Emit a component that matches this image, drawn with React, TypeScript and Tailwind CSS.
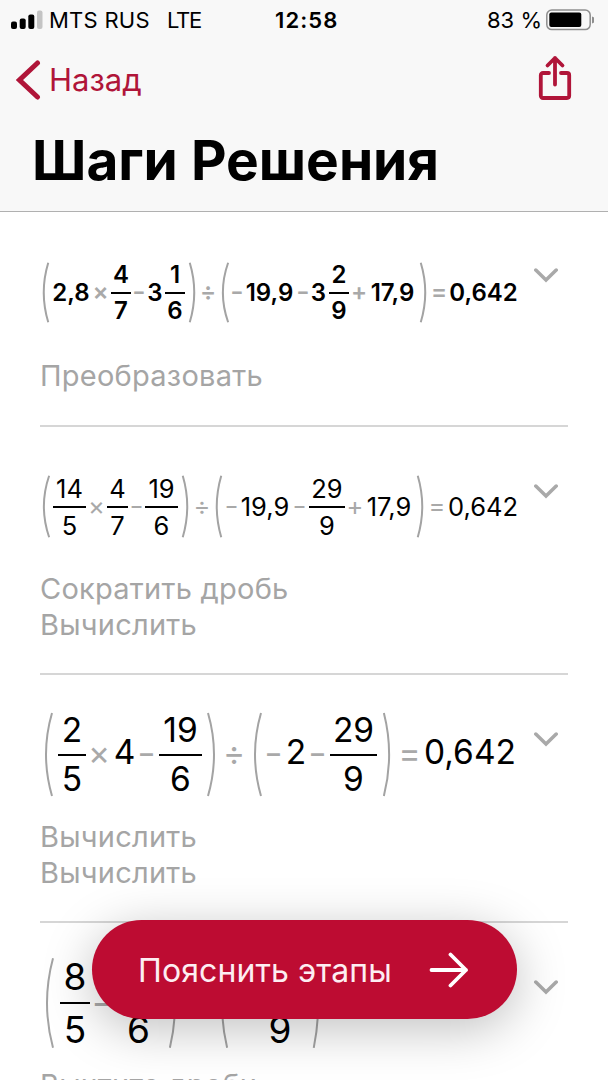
import React from 'react';
import type { ReactNode } from 'react';
import clsx from 'clsx';

interface TokenProps {
  className?: string;
  children?: ReactNode;
}

function Num({ className, children }: TokenProps) {
  return (
    <span className={clsx('flex shrink-0 justify-center whitespace-nowrap', className)}>
      {children}
    </span>
  );
}

function Op({ className, children }: TokenProps) {
  return (
    <span className={clsx('flex shrink-0 justify-center whitespace-nowrap pb-0.5 text-[#a9a9a9]', className)}>
      {children}
    </span>
  );
}

function Minus({ className }: { className?: string }) {
  return <Op className={clsx('scale-x-[1.2]', className)}>-</Op>;
}

function Frac({ top, bottom, className }: { top: string; bottom: string; className?: string }) {
  return (
    <span className={clsx('flex shrink-0 flex-col items-center whitespace-nowrap', className)}>
      <span>{top}</span>
      <span className="h-0.5 w-full bg-black" />
      <span>{bottom}</span>
    </span>
  );
}

function Paren({ right, className }: { right?: boolean; className?: string }) {
  return (
    <svg
      className={clsx('h-full shrink-0 overflow-visible text-[#a3a3a3]', className)}
      viewBox="0 0 8 80"
      preserveAspectRatio="none"
      fill="none"
      stroke="currentColor"
      strokeWidth="2"
    >
      <path
        d={right ? 'M1 1Q13 40 1 79' : 'M7 1Q-5 40 7 79'}
        vectorEffect="non-scaling-stroke"
      />
    </svg>
  );
}

function Chevron({ className }: { className?: string }) {
  return (
    <svg className={clsx('shrink-0', className)} width="24" height="15" viewBox="0 0 24 15" fill="none">
      <path d="M1.8 2 12 12 22.2 2" stroke="#a9a9a9" strokeWidth="3.5" strokeLinecap="round" />
    </svg>
  );
}

interface StepProps {
  className: string;
  formulaClass: string;
  chevronClass: string;
  notesClass: string;
  notes: string[];
  children: ReactNode;
}

function Step({ className, formulaClass, chevronClass, notesClass, notes, children }: StepProps) {
  return (
    <section className={clsx('mx-10 border-b-2 border-[#d6d6d6]', className)}>
      <div className="flex items-start">
        <div className={clsx('flex w-[494px] shrink-0 items-center', formulaClass)}>{children}</div>
        <Chevron className={chevronClass} />
      </div>
      <div className={clsx('text-[29px] leading-9 tracking-[0.25px] text-[#a5a5a5]', notesClass)}>
        {notes.map((note, i) => (
          <p key={i}>{note}</p>
        ))}
      </div>
    </section>
  );
}

function StatusBar() {
  return (
    <div className="flex h-10 items-center text-[22px]">
      <svg className="ml-[11px]" width="32" height="20" viewBox="0 0 32 20">
        <rect x="0" y="11.5" width="6" height="7.5" rx="2" />
        <rect x="8.7" y="8.5" width="6" height="10.5" rx="2" />
        <rect x="17.3" y="4.5" width="6" height="14.5" rx="2" />
        <rect x="26" y="0.5" width="5.5" height="18.5" rx="2" fill="#c4c4c4" />
      </svg>
      <span className="ml-1.5 w-[101px] whitespace-nowrap tracking-[0.25px]">MTS RUS</span>
      <span className="ml-[17px] w-[34px] whitespace-nowrap tracking-[-1.3px]">LTE</span>
      <span className="ml-[74px] w-[64px] whitespace-nowrap font-semibold tracking-[1.1px]">12:58</span>
      <span className="ml-[148px] w-[55px] whitespace-nowrap">83 %</span>
      <svg className="ml-1" width="48" height="22" viewBox="0 0 48 22">
        <rect x="0.8" y="1" width="43.4" height="19.6" rx="5" fill="none" stroke="#8e8e8e" strokeWidth="1.5" />
        <rect x="3.3" y="3.5" width="32" height="14.5" rx="2" />
        <path d="M46 7.5v7q3-1 3-3.5t-3-3.5Z" fill="#8e8e8e" />
      </svg>
    </div>
  );
}

export default function App() {
  return (
    <div className="relative h-[1080px] w-[608px] overflow-hidden bg-white font-['Inter','Liberation_Sans',sans-serif] text-black">
      <header className="h-[212px] border-b border-[#b0b0b0] bg-[#f8f8f8]">
        <StatusBar />
        <div className="flex h-20 items-center justify-between pl-4 pr-[36px] text-[#b01539]">
          <button className="flex items-center text-[31px]">
            <svg width="25" height="40" viewBox="0 0 25 40" fill="none">
              <path d="M21.500 3 3.500 20 21.500 37" stroke="currentColor" strokeWidth="5" strokeLinecap="round" />
            </svg>
            <span className="ml-2">Назад</span>
          </button>
          <svg className="-mt-1" width="34" height="46" viewBox="0 0 34 46" fill="none" stroke="currentColor" strokeWidth="3.8" strokeLinecap="round" strokeLinejoin="round">
            <path d="M11 18H5a2.2 2.2 0 0 0-2.2 2.2v20.6A2.2 2.2 0 0 0 5 43h24a2.2 2.2 0 0 0 2.2-2.2V20.2A2.2 2.2 0 0 0 29 18h-6" />
            <path d="M17 29.5V3M9.5 10.5 17 3l7.500 7.500" />
          </svg>
        </div>
        <h1 className="pl-8 text-[55px] font-bold leading-[81px]">Шаги Решения</h1>
      </header>

      <main>
        <Step
          className="pt-[50px] pb-[31px]"
          formulaClass="h-[61px] text-[24px] font-semibold leading-[33.500px]"
          chevronClass="mt-1.5"
          notesClass="mt-[35px]"
          notes={['Преобразовать']}
        >
          <Paren className="ml-[3px] w-1.5" />
          <Num className="ml-1 w-9">2,8</Num>
          <Op className="ml-1.5 w-[11px]">×</Op>
          <Frac className="ml-[5px] w-5" top="4" bottom="7" />
          <Minus className="ml-1 w-2" />
          <Num className="ml-[5px] w-3.5">3</Num>
          <Frac className="ml-[3px] w-5" top="1" bottom="6" />
          <Paren right className="ml-1 w-1.5" />
          <Op className="ml-[7px] w-3">÷</Op>
          <Paren className="ml-2 w-[7px]" />
          <Minus className="ml-1 w-2" />
          <Num className="ml-[5px] w-[47px]">19,9</Num>
          <Minus className="ml-1.5 w-2" />
          <Num className="ml-[5px] w-[13px]">3</Num>
          <Frac className="ml-1 w-5" top="2" bottom="9" />
          <Op className="ml-1 w-3">+</Op>
          <Num className="ml-[5px] w-[45px]">17,9</Num>
          <Paren right className="ml-[5px] w-1.5" />
          <Op className="ml-[7px] w-3">=</Op>
          <Num className="ml-[5px] w-[67px]">0,642</Num>
        </Step>

        <Step
          className="pt-12 pb-[30px]"
          formulaClass="h-[63px] text-[25.500px] leading-[35px]"
          chevronClass="mt-[9px]"
          notesClass="mt-[33px]"
          notes={['Сократить дробь', 'Вычислить']}
        >
          <Paren className="ml-[3px] w-[7px]" />
          <Frac className="ml-[3px] w-[33px]" top="14" bottom="5" />
          <Op className="ml-[5px] w-[11px]">×</Op>
          <Frac className="ml-[5px] w-[21px]" top="4" bottom="7" />
          <Minus className="ml-[5px] w-[7px]" />
          <Frac className="ml-[5px] w-[33px]" top="19" bottom="6" />
          <Paren right className="ml-1 w-1.5" />
          <Op className="ml-2 w-3">÷</Op>
          <Paren className="ml-2 w-1.5" />
          <Minus className="ml-[5px] w-[9px]" />
          <Num className="ml-[5px] w-12">19,9</Num>
          <Minus className="ml-1.5 w-[9px]" />
          <Frac className="ml-[5px] w-9" top="29" bottom="9" />
          <Op className="ml-1 w-3">+</Op>
          <Num className="ml-1.5 w-11">17,9</Num>
          <Paren right className="ml-1.5 w-1.5" />
          <Op className="ml-2 w-3">=</Op>
          <Num className="ml-1.5 w-[68px]">0,642</Num>
        </Step>

        <Step
          className="pt-[37px] pb-[30px]"
          formulaClass="h-[85px] text-[33.500px] leading-[47px]"
          chevronClass="mt-5"
          notesClass="mt-[22px]"
          notes={['Вычислить', 'Вычислить']}
        >
          <Paren className="ml-[5px] w-2" />
          <Frac className="ml-[5px] w-7" top="2" bottom="5" />
          <Op className="ml-1.5 w-3.5">×</Op>
          <Num className="ml-[9px] w-[19px] pb-1">4</Num>
          <Minus className="ml-[7px] w-[11px]" />
          <Frac className="ml-[7px] w-[43px]" top="19" bottom="6" />
          <Paren right className="ml-[5px] w-2" />
          <Op className="ml-[11px] w-4">÷</Op>
          <Paren className="ml-3 w-2" />
          <Minus className="ml-1.5 w-[11px]" />
          <Num className="ml-[9px] w-4 pb-1">2</Num>
          <Minus className="ml-2 w-[11px]" />
          <Frac className="ml-[7px] w-[47px]" top="29" bottom="9" />
          <Paren right className="ml-1.5 w-[7px]" />
          <Op className="ml-3 w-[15px]">=</Op>
          <Num className="ml-2 w-[90px] pb-1">0,642</Num>
        </Step>

        <Step
          className="pt-[34px] pb-[30px]"
          formulaClass="h-[92px] text-[37px] leading-[51px]"
          chevronClass="mt-[23px]"
          notesClass="mt-[18px]"
          notes={['Вычтите дроби']}
        >
          <Paren className="ml-1.5 w-2" />
          <Frac className="ml-1.5 w-[30px]" top="8" bottom="5" />
          <Minus className="ml-1.5 w-3" />
          <Frac className="ml-[7px] w-[47px]" top="19" bottom="6" />
          <Paren right className="ml-[7px] w-[7px]" />
          <Op className="ml-3 w-[18px]">÷</Op>
          <Paren className="ml-[15px] w-[7px]" />
          <Minus className="ml-[7px] w-3" />
          <Frac className="ml-2 w-[50px]" top="47" bottom="9" />
          <Paren right className="ml-2 w-1.5" />
          <Op className="ml-[13px] w-[17px]">=</Op>
          <Num className="ml-[9px] w-[100px] pb-2.5">0,642</Num>
        </Step>
      </main>

      <button className="absolute left-[92px] top-[920px] flex h-[99px] w-[425px] items-center justify-between rounded-full bg-[#bd0c32] pb-0 pl-[46px] pr-[48px] text-[32px] tracking-[0.1px] text-[#fdeef2] shadow-[0_10px_50px_rgba(0,0,0,0.25)]">
        <span className="whitespace-nowrap pt-0.5">Пояснить этапы</span>
        <svg width="40" height="36" viewBox="0 0 40 36" fill="none" stroke="white" strokeWidth="3.800" strokeLinecap="round" strokeLinejoin="round">
          <path d="M2.500 18H37M21.500 2.500 37 18 21.500 33.500" />
        </svg>
      </button>
    </div>
  );
}
